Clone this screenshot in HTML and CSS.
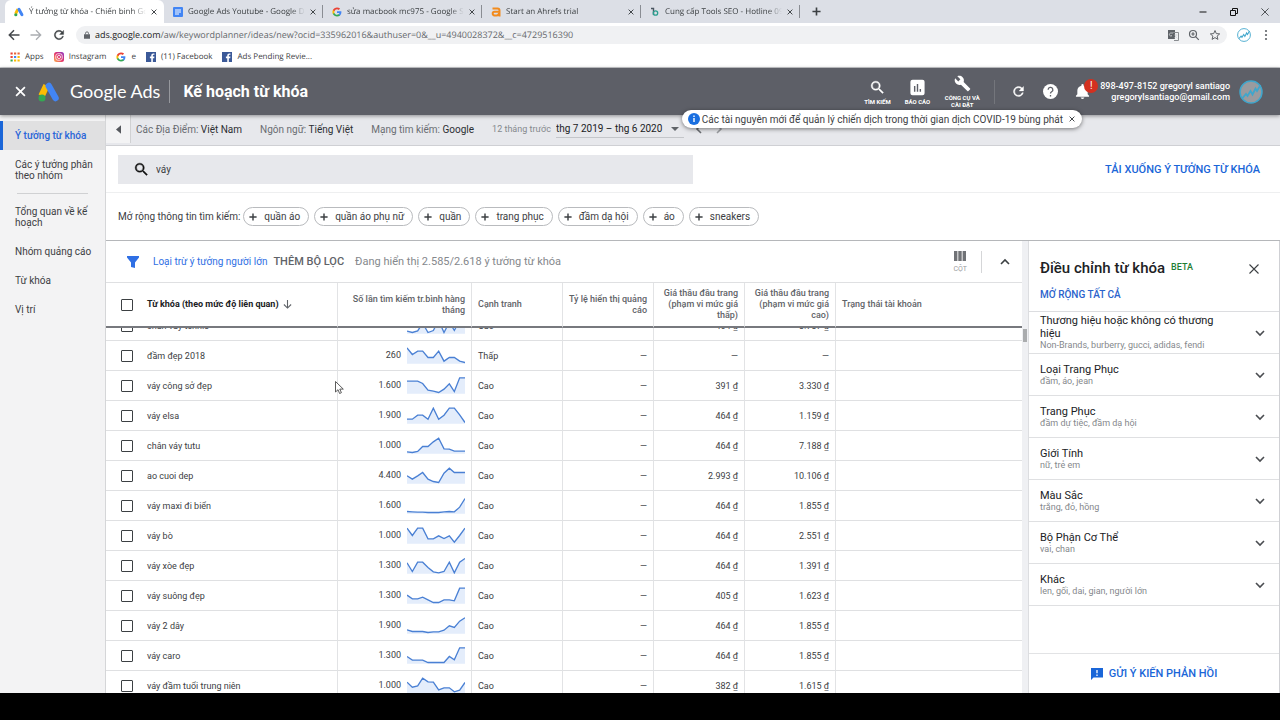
FILE: index.html
```
<!DOCTYPE html>
<html lang="vi">
  <head>
    <meta charset="utf-8">
    <title>Ý tưởng từ khóa - Chiến binh</title>
    <link rel="stylesheet" href="styles.css">
  </head>
  <body>
  <svg class="defs" width="0" height="0" aria-hidden="true">
    <symbol id="x" viewBox="0 0 10 10"><path d="M1 1l8 8M9 1l-8 8" fill="none" stroke="currentColor" stroke-width="1.6"/></symbol>
    <symbol id="x-thin" viewBox="0 0 10 10"><path d="M.5 .5l9 9M9.500 .5l-9 9" fill="none" stroke="currentColor" stroke-width="1.1"/></symbol>
    <symbol id="plus" viewBox="0 0 10 10"><path d="M5 0.500v9M.5 5h9" fill="none" stroke="currentColor" stroke-width="1.800"/></symbol>
    <symbol id="down" viewBox="0 0 10 10"><path d="M1 3l4 4 4-4" fill="none" stroke="currentColor" stroke-width="1.600"/></symbol>
    <symbol id="search" viewBox="0 0 24 24"><path d="M15.500 14h-.79l-.28-.27A6.470 6.470 0 0 0 16 9.500 6.500 6.500 0 1 0 9.500 16c1.610 0 3.090-.59 4.230-1.570l.27.28v.79l5 4.990L20.490 19zm-6 0a4.500 4.500 0 1 1 0-9 4.500 4.500 0 0 1 0 9z" fill="currentColor" stroke="currentColor" stroke-width=".5"/></symbol>
    <symbol id="reload" viewBox="0 0 24 24"><path d="M17.650 6.350A8 8 0 1 0 19.730 14h-2.080A6 6 0 1 1 12 6c1.660 0 3.140.69 4.220 1.780L13 11h7V4z" fill="currentColor" stroke="currentColor" stroke-width=".6"/></symbol>
    <symbol id="ads" viewBox="0 0 22 20"><path d="M8.500 3.500L3.500 14" stroke="#fbbc04" stroke-width="6.500"/><path d="M10.800 4L17.500 16" stroke="#4285f4" stroke-width="6.500" stroke-linecap="round"/><circle cx="4" cy="16" r="3.500" fill="#34a853"/></symbol>
    <symbol id="google" viewBox="0 0 24 24"><path d="M22.560 12.250c0-.78-.07-1.530-.2-2.250H12v4.260h5.920c-.26 1.370-1.040 2.530-2.210 3.310v2.770h3.570c2.080-1.920 3.280-4.740 3.280-8.090z" fill="#4285f4"/><path d="M12 23c2.970 0 5.460-.98 7.280-2.660l-3.570-2.770c-.98.66-2.230 1.060-3.710 1.060-2.860 0-5.290-1.930-6.160-4.530H2.180v2.840C3.990 20.530 7.700 23 12 23z" fill="#34a853"/><path d="M5.840 14.090a6.600 6.600 0 0 1 0-4.180V7.070H2.180a11 11 0 0 0 0 9.860z" fill="#fbbc05"/><path d="M12 5.380c1.620 0 3.060.56 4.210 1.640l3.150-3.150C17.450 2.090 14.970 1 12 1 7.700 1 3.990 3.470 2.180 7.070l3.660 2.840C6.710 7.310 9.140 5.380 12 5.380z" fill="#ea4335"/></symbol>
    <symbol id="facebook" viewBox="0 0 20 20"><path d="M0 0h20v20H0z" fill="#3b5998"/><path d="M13.700 20v-7.700h2.700l.4-3.100h-3.100v-2c0-.9.300-1.500 1.500-1.500h1.700V2.900c-.3 0-1.300-.1-2.400-.1-2.400 0-4 1.500-4 4.100v2.300H7.800v3.100h2.700V20z" fill="#fff"/></symbol>
    <symbol id="chart" viewBox="0 0 24 24"><circle cx="12" cy="12" r="11" fill="var(--fill, #fff)" stroke="#3fa6cc" stroke-width="1.500"/><path d="M3.500 18l3.500-4 1.500 2 3-5 2 3.500 3-6 1.500 2.500L21.500 5" fill="none" stroke="#3fa6cc" stroke-width="1.800"/></symbol>
  </svg>

  <div class="browser">
    <div class="tabs">
      <div class="tab active">
        <svg class="favicon"><use href="#ads"/></svg>
        <span class="tab-title">Ý tưởng từ khóa - Chiến binh Go</span>
        <button class="tab-close" type="button" aria-label="Close"><svg><use href="#x"/></svg></button>
      </div>
      <div class="tab">
        <svg class="favicon" viewBox="0 0 10 10"><rect width="10" height="10" rx="1" fill="#4285f4"/><path d="M2 3h6M2 5h6M2 7h4" stroke="#fff"/></svg>
        <span class="tab-title">Google Ads Youtube - Google D</span>
        <button class="tab-close" type="button" aria-label="Close"><svg><use href="#x"/></svg></button>
      </div>
      <div class="tab">
        <svg class="favicon"><use href="#google"/></svg>
        <span class="tab-title">sửa macbook mc975 - Google Se</span>
        <button class="tab-close" type="button" aria-label="Close"><svg><use href="#x"/></svg></button>
      </div>
      <div class="tab">
        <svg class="favicon" viewBox="0 0 10 10"><path d="M1.500 1.500h5q2 0 2 2V9.500M8 4.800H3.500Q1.700 4.800 1.700 6.600T3.500 8.400H5.500Q8 8.400 8 6" fill="none" stroke="#f28b1d" stroke-width="2"/></svg>
        <span class="tab-title">Start an Ahrefs trial</span>
        <button class="tab-close" type="button" aria-label="Close"><svg><use href="#x"/></svg></button>
      </div>
      <div class="tab">
        <svg class="favicon" viewBox="0 0 10 10"><path d="M1 1.500h2.500V8" fill="none" stroke="#4a5560" stroke-width="1.400"/><circle cx="5.500" cy="6" r="2.200" fill="none" stroke="#2c9f8f" stroke-width="1.300"/></svg>
        <span class="tab-title">Cung cấp Tools SEO - Hotline 09</span>
        <button class="tab-close" type="button" aria-label="Close"><svg><use href="#x"/></svg></button>
      </div>
      <button class="new-tab" type="button" aria-label="New tab"><svg><use href="#plus"/></svg></button>
      <div class="window-buttons">
        <button type="button" aria-label="Minimize"><svg viewBox="0 0 8 8"><path d="M.5 4h7" stroke="#111"/></svg></button>
        <button type="button" aria-label="Restore"><svg viewBox="0 0 8 8"><path d="M2.500 2.500v-2h5v5h-2M.5 2.500h5v5h-5z" fill="none" stroke="#111"/></svg></button>
        <button type="button" aria-label="Close window"><svg><use href="#x-thin"/></svg></button>
      </div>
    </div>

    <div class="toolbar">
      <button type="button" aria-label="Back"><svg viewBox="0 0 12 12"><path d="M11.500 6H1.500M6 1.300L1.300 6 6 10.700" fill="none" stroke="#45484c" stroke-width="1.500"/></svg></button>
      <button type="button" aria-label="Forward"><svg viewBox="0 0 12 12"><path d="M.5 6h10M6 1.300L10.700 6 6 10.700" fill="none" stroke="#aaadb1" stroke-width="1.300"/></svg></button>
      <button type="button" aria-label="Reload"><svg class="reload"><use href="#reload"/></svg></button>
      <div class="omnibox">
        <svg class="lock" viewBox="0 0 8 10"><path d="M0 4h8v6H0z" fill="#5f6368"/><path d="M2 4V2.800a2 2 0 0 1 4 0V4" fill="none" stroke="#5f6368" stroke-width="1.200"/></svg>
        <div class="url"><b>ads.google.com</b>/aw/keywordplanner/ideas/new?ocid=335962016&amp;authuser=0&amp;__u=4940028372&amp;__c=4729516390</div>
        <svg viewBox="0 0 12 12"><path d="M1 1h7v9H1z" fill="#5f6368"/><path d="M6 3.500h5.500v8H7" fill="none" stroke="#8a8d91"/><path d="M6 4H4a1.500 1.500 0 1 0 1 2.500H4.500M7.500 6h3M9 5v1c0 2-1 2.500-1.500 3M8 7l2.500 2.500" fill="none" stroke="#d6d8da" stroke-width=".8"/></svg>
        <svg viewBox="0 0 12 12"><circle cx="5" cy="5" r="3.500" fill="none" stroke="#5f6368" stroke-width="1.200"/><path d="M7.600 7.600l3.200 3.200M3.300 5h3.400M5 3.300v3.400" stroke="#5f6368" stroke-width="1.200"/></svg>
        <svg viewBox="0 0 12 12"><path d="M6 1.500l1.300 3.100 3.400.3-2.600 2.200.8 3.300L6 8.600l-2.900 1.800.8-3.300-2.600-2.200 3.400-.3z" fill="none" stroke="#5f6368"/></svg>
      </div>
      <svg class="profile"><use href="#chart"/></svg>
      <button type="button" aria-label="Menu"><svg viewBox="0 0 12 12" fill="#5f6368"><circle cx="6" cy="2" r="1.100"/><circle cx="6" cy="6" r="1.100"/><circle cx="6" cy="10" r="1.100"/></svg></button>
    </div>

    <nav class="bookmarks">
      <a href="#"><svg viewBox="0 0 10 10"><path d="M.5 1.500h2.200M.5 5h2.200" stroke="#ea4335" stroke-width="2"/><path d="M4 1.500h2.200M7.500 1.500h2.200" stroke="#e8673a" stroke-width="2"/><path d="M4 5h2.200" stroke="#4285f4" stroke-width="2"/><path d="M7.500 5h2.200M7.500 8.500h2.200M4 8.500h2.200" stroke="#fbbc04" stroke-width="2"/><path d="M.5 8.500h2.200" stroke="#34a853" stroke-width="2"/></svg>Apps</a>
      <a href="#"><svg viewBox="0 0 10 10"><defs><linearGradient id="insta" x1="0" y1="1" x2="1" y2="0"><stop offset="0" stop-color="#fdb34b"/><stop offset=".5" stop-color="#e2306c"/><stop offset="1" stop-color="#8a3ac8"/></linearGradient></defs><rect width="10" height="10" rx="2.500" fill="url(#insta)"/><rect x="1.800" y="1.800" width="6.400" height="6.400" rx="2" fill="none" stroke="#fff" stroke-width=".8"/><circle cx="5" cy="5" r="1.600" fill="none" stroke="#fff" stroke-width=".8"/></svg>Instagram</a>
      <a href="#"><svg><use href="#google"/></svg>e</a>
      <a href="#"><svg><use href="#facebook"/></svg>(11) Facebook</a>
      <a href="#"><svg><use href="#facebook"/></svg>Ads Pending Revie...</a>
    </nav>
  </div>

  <header class="header">
    <button class="header-close" type="button" aria-label="Đóng"><svg><use href="#x"/></svg></button>
    <svg class="logo"><use href="#ads"/></svg>
    <span class="brand">Google Ads</span>
    <h1>Kế hoạch từ khóa</h1>
    <button class="tool" type="button"><svg><use href="#search"/></svg>TÌM KIẾM</button>
    <button class="tool" type="button"><svg viewBox="0 0 24 24"><path d="M19 1H5a3 3 0 0 0-3 3v16a3 3 0 0 0 3 3h14a3 3 0 0 0 3-3V4a3 3 0 0 0-3-3zM9 18H7v-8h2zm4 0h-2V7h2zm4 0h-2v-4h2z" fill="#fff"/></svg>BÁO CÁO</button>
    <button class="tool wide" type="button"><svg viewBox="0 0 24 24"><path d="M22.700 19l-9.100-9.100c.9-2.300.4-5-1.500-6.900-2-2-5-2.400-7.400-1.300L9 6 6 9 1.600 4.700C.4 7.100.9 10.100 2.900 12.100c1.900 1.900 4.600 2.400 6.900 1.500l9.100 9.100c.4.4 1 .4 1.400 0l2.300-2.300c.5-.4.5-1.100.1-1.400z" fill="#fff"/></svg>CÔNG CỤ VÀ CÀI ĐẶT</button>
    <div class="header-icons">
      <button type="button" aria-label="Làm mới"><svg><use href="#reload"/></svg></button>
      <button type="button" aria-label="Trợ giúp"><svg viewBox="0 0 16 16"><circle cx="8" cy="8" r="8" fill="#fff"/><path d="M5.500 6.200a2.500 2.500 0 1 1 3.700 2.100C8.300 8.900 8 9.200 8 10.200M8 11.600v1.600" fill="none" stroke="#5f6168" stroke-width="1.400"/></svg></button>
      <button class="bell" type="button" aria-label="Thông báo"><svg viewBox="0 0 16 16"><path d="M8 16a2 2 0 0 0 2-1.600H6A2 2 0 0 0 8 16zM13.500 11V7c0-2.600-1.600-4.600-4.300-5.200V1.200a1.200 1.200 0 0 0-2.400 0v.6C4.100 2.400 2.500 4.400 2.500 7v4L1 12.600v.9h14v-.9z" fill="#fff"/></svg><span class="badge">!</span></button>
    </div>
    <div class="account">898-497-8152 gregoryl santiago<br>gregorylsantiago@gmail.com</div>
    <svg class="avatar"><use href="#chart"/></svg>
    <div class="notice">
      <svg viewBox="0 0 12 12"><circle cx="6" cy="6" r="6" fill="#1a6fe0"/><path d="M6 2.500v1.500M6 5v4" stroke="#fff" stroke-width="1.400"/></svg>
      Các tài nguyên mới để quản lý chiến dịch trong thời gian dịch COVID-19 bùng phát
      <button type="button" aria-label="Đóng thông báo"><svg><use href="#x"/></svg></button>
    </div>
  </header>

  <div class="app">
    <nav class="sidebar">
      <a class="current" href="#">Ý tưởng từ khóa</a>
      <a href="#">Các ý tưởng phân theo nhóm</a>
      <hr>
      <a href="#">Tổng quan về kế hoạch</a>
      <a href="#">Nhóm quảng cáo</a>
      <a href="#">Từ khóa</a>
      <a href="#">Vị trí</a>
    </nav>

    <main>
      <div class="settings">
        <button class="collapse" type="button" aria-label="Thu gọn"><svg viewBox="0 0 6 10"><path d="M6 0v10L0 5z" fill="#55585d"/></svg></button>
        <span>Các Địa Điểm: <b>Việt Nam</b></span>
        <span>Ngôn ngữ: <b>Tiếng Việt</b></span>
        <span>Mạng tìm kiếm: <b>Google</b></span>
        <div class="dates">
          <label for="range">12 tháng trước</label>
          <div class="select">
            <select id="range"><option>thg 7 2019 – thg 6 2020</option></select>
            <svg viewBox="0 0 8 4"><path d="M0 0h8L4 4z" fill="#5f6368"/></svg>
          </div>
          <button class="prev" type="button" aria-label="Trước"><svg><use href="#down"/></svg></button>
          <button class="next" type="button" aria-label="Sau"><svg><use href="#down"/></svg></button>
        </div>
      </div>

      <div class="search-row">
        <div class="search-box">
          <svg><use href="#search"/></svg>
          <input type="text" value="váy" aria-label="Từ khóa tìm kiếm">
        </div>
        <a class="download" href="#">TẢI XUỐNG Ý TƯỞNG TỪ KHÓA</a>
      </div>

      <div class="chips">
        <span>Mở rộng thông tin tìm kiếm:</span>
        <button type="button"><svg><use href="#plus"/></svg>quần áo</button>
        <button type="button"><svg><use href="#plus"/></svg>quần áo phụ nữ</button>
        <button type="button"><svg><use href="#plus"/></svg>quần</button>
        <button type="button"><svg><use href="#plus"/></svg>trang phục</button>
        <button type="button"><svg><use href="#plus"/></svg>đầm dạ hội</button>
        <button type="button"><svg><use href="#plus"/></svg>áo</button>
        <button type="button"><svg><use href="#plus"/></svg>sneakers</button>
      </div>

      <div class="content">
        <section class="results">
          <div class="filters">
            <svg class="funnel" viewBox="0 0 12 12"><path d="M0 0h12v1.500L8 6.500V12L4 11V6.500L0 1.500z" fill="#2f6fe4"/></svg>
            <a href="#">Loại trừ ý tưởng người lớn</a>
            <button class="add-filter" type="button">THÊM BỘ LỌC</button>
            <span class="count">Đang hiển thị 2.585/2.618 ý tưởng từ khóa</span>
            <button class="columns" type="button"><svg viewBox="0 0 12 10"><path d="M0 0h3.400v10H0zM4.300 0h3.400v10H4.300zM8.600 0H12v10H8.600z" fill="#707276"/></svg>CỘT</button>
            <button class="fold" type="button" aria-label="Thu gọn bảng"><svg><use href="#down"/></svg></button>
          </div>

          <div class="table-scroll">
            <table>
              <colgroup>
                <col class="c-check"><col class="c-keyword"><col class="c-volume"><col class="c-metric"><col class="c-metric"><col class="c-metric"><col class="c-metric"><col>
              </colgroup>
              <thead>
                <tr>
                  <th><input type="checkbox" aria-label="Chọn tất cả"></th>
                  <th class="sorted">Từ khóa (theo mức độ liên quan) <svg viewBox="0 0 10 10"><path d="M5 0v9M1 5l4 4 4-4" fill="none" stroke="#5f6368" stroke-width="1.200"/></svg></th>
                  <th class="num">Số lần tìm kiếm tr.bình hàng tháng</th>
                  <th>Cạnh tranh</th>
                  <th class="num">Tỷ lệ hiển thị quảng cáo</th>
                  <th class="num">Giá thầu đầu trang (phạm vi mức giá thấp)</th>
                  <th class="num">Giá thầu đầu trang (phạm vi mức giá cao)</th>
                  <th>Trạng thái tài khoản</th>
                </tr>
              </thead>
              <tbody>
                <tr><td><input type="checkbox" aria-label="chân váy tennis"></td><td>chân váy tennis</td><td class="num">1.300<svg class="spark" data-values="42,46,41,18,46,40,10,46,15,40,10,5"></svg></td><td>Cao</td><td class="num">—</td><td class="num">464 ₫</td><td class="num">3.737 ₫</td><td></td></tr>
                <tr><td><input type="checkbox" aria-label="đầm đẹp 2018"></td><td>đầm đẹp 2018</td><td class="num">260<svg class="spark" data-values="2,22,12,12,31,31,12,42,31,31,42,46"></svg></td><td>Thấp</td><td class="num">—</td><td class="num">—</td><td class="num">—</td><td></td></tr>
                <tr><td><input type="checkbox" aria-label="váy công sở đẹp"></td><td>váy công sở đẹp</td><td class="num">1.600<svg class="spark" data-values="12,12,12,19,39,42,46,36,20,43,2,2"></svg></td><td>Cao</td><td class="num">—</td><td class="num">391 ₫</td><td class="num">3.330 ₫</td><td></td></tr>
                <tr><td><input type="checkbox" aria-label="váy elsa"></td><td>váy elsa</td><td class="num">1.900<svg class="spark" data-values="36,36,24,24,36,3,36,24,3,3,23,46"></svg></td><td>Cao</td><td class="num">—</td><td class="num">464 ₫</td><td class="num">1.159 ₫</td><td></td></tr>
                <tr><td><input type="checkbox" aria-label="chân váy tutu"></td><td>chân váy tutu</td><td class="num">1.000<svg class="spark" data-values="44,46,43,28,28,14,3,35,36,42,42,42"></svg></td><td>Cao</td><td class="num">—</td><td class="num">464 ₫</td><td class="num">7.188 ₫</td><td></td></tr>
                <tr><td><input type="checkbox" aria-label="ao cuoi dep"></td><td>ao cuoi dep</td><td class="num">4.400<svg class="spark" data-values="26,36,26,16,36,43,46,18,3,16,16,16"></svg></td><td>Cao</td><td class="num">—</td><td class="num">2.993 ₫</td><td class="num">10.106 ₫</td><td></td></tr>
                <tr><td><input type="checkbox" aria-label="váy maxi đi biển"></td><td>váy maxi đi biển</td><td class="num">1.600<svg class="spark" data-values="43,44,45,45,46,46,46,44,43,44,30,4"></svg></td><td>Cao</td><td class="num">—</td><td class="num">464 ₫</td><td class="num">1.855 ₫</td><td></td></tr>
                <tr><td><input type="checkbox" aria-label="váy bò"></td><td>váy bò</td><td class="num">1.000<svg class="spark" data-values="3,25,3,3,35,35,26,34,26,45,25,3"></svg></td><td>Cao</td><td class="num">—</td><td class="num">464 ₫</td><td class="num">2.551 ₫</td><td></td></tr>
                <tr><td><input type="checkbox" aria-label="váy xòe đẹp"></td><td>váy xòe đẹp</td><td class="num">1.300<svg class="spark" data-values="17,43,15,15,31,44,47,43,15,47,15,4"></svg></td><td>Cao</td><td class="num">—</td><td class="num">464 ₫</td><td class="num">1.391 ₫</td><td></td></tr>
                <tr><td><input type="checkbox" aria-label="váy suông đẹp"></td><td>váy suông đẹp</td><td class="num">1.300<svg class="spark" data-values="24,35,35,30,38,46,46,38,38,41,3,3"></svg></td><td>Cao</td><td class="num">—</td><td class="num">405 ₫</td><td class="num">1.623 ₫</td><td></td></tr>
                <tr><td><input type="checkbox" aria-label="váy 2 dây"></td><td>váy 2 dây</td><td class="num">1.900<svg class="spark" data-values="38,43,43,43,46,44,44,39,26,31,12,2"></svg></td><td>Cao</td><td class="num">—</td><td class="num">464 ₫</td><td class="num">1.855 ₫</td><td></td></tr>
                <tr><td><input type="checkbox" aria-label="váy caro"></td><td>váy caro</td><td class="num">1.300<svg class="spark" data-values="28,39,39,39,46,46,46,46,28,38,2,2"></svg></td><td>Cao</td><td class="num">—</td><td class="num">464 ₫</td><td class="num">1.855 ₫</td><td></td></tr>
                <tr><td><input type="checkbox" aria-label="váy đầm tuổi trung niên"></td><td>váy đầm tuổi trung niên</td><td class="num">1.000<svg class="spark" data-values="15,30,26,3,14,15,38,32,32,44,39,16"></svg></td><td>Cao</td><td class="num">—</td><td class="num">382 ₫</td><td class="num">1.615 ₫</td><td></td></tr>
              </tbody>
            </table>
          </div>
        </section>

        <div class="gutter"><div class="thumb"></div></div>

        <aside class="refine">
          <div class="refine-head">
            <h2>Điều chỉnh từ khóa</h2>
            <span class="beta">BETA</span>
            <button type="button" aria-label="Đóng bảng"><svg><use href="#x-thin"/></svg></button>
          </div>
          <a class="expand-all" href="#">MỞ RỘNG TẤT CẢ</a>
          <div class="groups">
            <button type="button"><span>Thương hiệu hoặc không có thương hiệu<small>Non-Brands, burberry, gucci, adidas, fendi</small></span><svg><use href="#down"/></svg></button>
            <button type="button"><span>Loại Trang Phục<small>đầm, áo, jean</small></span><svg><use href="#down"/></svg></button>
            <button type="button"><span>Trang Phục<small>đầm dự tiệc, đầm dạ hội</small></span><svg><use href="#down"/></svg></button>
            <button type="button"><span>Giới Tính<small>nữ, trẻ em</small></span><svg><use href="#down"/></svg></button>
            <button type="button"><span>Màu Sắc<small>trắng, đỏ, hồng</small></span><svg><use href="#down"/></svg></button>
            <button type="button"><span>Bộ Phận Cơ Thể<small>vai, chan</small></span><svg><use href="#down"/></svg></button>
            <button type="button"><span>Khác<small>len, gối, dai, gian, người lớn</small></span><svg><use href="#down"/></svg></button>
          </div>
          <button class="feedback" type="button"><svg viewBox="0 0 12 12"><path d="M0 0h12v9.500H2.500L0 12z" fill="#1a66d8"/><path d="M6 2v3.300M6 6.500V8" stroke="#fff" stroke-width="1.300"/></svg>GỬI Ý KIẾN PHẢN HỒI</button>
        </aside>
      </div>
    </main>
  </div>

  <svg class="cursor" viewBox="0 0 9 13"><path d="M.5 .5v10.500l2.500-2.300 1.600 3.800 1.800-.8-1.600-3.600h3.500z" fill="#fff" stroke="#333" stroke-width=".8"/></svg>

  <script src="script.js"></script>
  </body>
</html>
```

FILE: styles.css
```
* {
  box-sizing: border-box;
}
body {
  display: flex;
  flex-direction: column;
  height: 100vh;
  margin: 0;
  padding-bottom: 27px;
  overflow: hidden;
  background-color: #000;
  color: #3c4043;
  font-family: Roboto, "Liberation Sans", sans-serif;
  font-size: 10px;
}
a {
  color: inherit;
  text-decoration: none;
}
button {
  display: flex;
  align-items: center;
  padding: 0;
  border: 0;
  background: none;
  color: inherit;
  font: inherit;
  text-rendering: inherit;
  cursor: pointer;
}
svg {
  flex: none;
  width: 12px;
  height: 12px;
}
.defs {
  position: absolute;
  width: 0;
  height: 0;
}

/* Browser */
.browser {
  flex: none;
  background-color: #fff;
  font-family: "Open Sans", "Noto Sans", sans-serif;
  font-size: 8px;
  text-rendering: geometricPrecision;
}
.tabs {
  display: flex;
  align-items: center;
  height: 23px;
  padding-left: 5px;
  background-color: #dcdfe6;
}
.tab {
  display: flex;
  flex: 0 1 159px;
  align-items: center;
  min-width: 0;
  height: 23px;
  padding: 0 7px 0 9px;
  gap: 5px;
}
.tab.active {
  border-radius: 6px 6px 0 0;
  background-color: #fff;
}
.tab:not(.active) {
  background: linear-gradient(#8a8d93, #8a8d93) right center / 1px 13px no-repeat;
}
.favicon {
  width: 10px;
  height: 10px;
}
.tab-title {
  flex: 1;
  overflow: hidden;
  white-space: nowrap;
  -webkit-mask-image: linear-gradient(90deg, #000 88%, transparent);
  mask-image: linear-gradient(90deg, #000 88%, transparent);
}
.tab-close svg {
  width: 6px;
  height: 6px;
}
.new-tab {
  margin-left: 12px;
}
.new-tab svg {
  width: 9px;
  height: 9px;
}
.window-buttons {
  display: flex;
  margin-left: auto;
}
.window-buttons button {
  justify-content: center;
  width: 31px;
  height: 20px;
}
.window-buttons svg {
  width: 8px;
  height: 8px;
}
.toolbar {
  display: flex;
  align-items: center;
  height: 23px;
  padding: 0 8px;
  gap: 10px;
}
.toolbar > button:nth-of-type(3) svg {
  width: 14px;
  height: 14px;
}
.omnibox {
  display: flex;
  flex: 1;
  align-items: center;
  height: 18px;
  padding: 0 6px 0 8px;
  gap: 9px;
  border-radius: 9px;
  background-color: #f0f1f3;
}
.lock {
  width: 6px;
  height: 8px;
}
.url {
  flex: 1;
  margin-left: -4px;
  color: #66696d;
  font-size: 9px;
}
.url b {
  color: #222;
  font-weight: normal;
}
.profile {
  width: 14px;
  height: 14px;
  margin-right: -1px;
}
.bookmarks {
  display: flex;
  align-items: center;
  height: 22px;
  padding: 0 10px;
  gap: 10px;
  border-bottom: 1px solid #c9cbce;
}
.bookmarks a {
  display: flex;
  align-items: center;
  gap: 5px;
}
.bookmarks svg {
  width: 10px;
  height: 10px;
}

/* Header */
.header {
  position: relative;
  z-index: 2;
  display: flex;
  flex: none;
  align-items: center;
  height: 47px;
  padding: 0 17px 0 15px;
  background-color: #5d5f67;
  box-shadow: 0 1px 4px rgba(0, 0, 0, .4);
  color: #fff;
}
.header-close svg {
  width: 11px;
  height: 11px;
}
.logo {
  width: 22px;
  height: 20px;
  margin: 0 10px 0 12px;
}
.brand {
  padding-right: 9px;
  border-right: 1px solid #96989d;
  font-family: Lato, sans-serif;
  font-size: 18px;
  line-height: 23px;
}
h1 {
  flex: 1;
  margin: 0 0 0 13px;
  font-size: 16px;
  font-weight: 700;
}
.tool {
  flex-direction: column;
  margin-right: 14px;
  gap: 2px;
  font-size: 6px;
  font-weight: 700;
  line-height: 7px;
}
.tool svg {
  width: 17px;
  height: 17px;
}
.tool.wide {
  width: 36px;
}
.header-icons {
  display: flex;
  margin-right: 10px;
  padding-left: 16px;
  gap: 17px;
  border-left: 1px solid #74767c;
}
.header-icons button {
  height: 24px;
}
.header-icons svg {
  width: 15px;
  height: 15px;
}
.bell {
  position: relative;
}
.badge {
  position: absolute;
  top: -1px;
  right: -8px;
  width: 14px;
  height: 14px;
  border-radius: 7px;
  background-color: #d3301f;
  font-size: 10px;
  line-height: 14px;
  text-align: center;
}
.account {
  margin-right: 9px;
  font-size: 9px;
  font-weight: 500;
  line-height: 11px;
  text-align: right;
}
.avatar {
  --fill: #999b9f;
  width: 24px;
  height: 24px;
}
.notice {
  position: absolute;
  top: 42px;
  right: 198px;
  display: flex;
  align-items: center;
  height: 18px;
  padding: 0 7px 0 6px;
  gap: 2px;
  border-radius: 9px;
  background-color: #fff;
  box-shadow: 0 1px 4px rgba(0, 0, 0, .5);
  color: #3c4043;
}
.notice button {
  margin-left: 4px;
}
.notice button svg {
  width: 6px;
  height: 6px;
}

/* Layout */
.app {
  display: flex;
  flex: 1;
  min-height: 0;
  background-color: #fff;
}
.sidebar {
  flex: none;
  width: 106px;
  padding-top: 6px;
  border-right: 1px solid #d5d6d8;
  background-color: #f3f3f4;
  line-height: 11px;
}
.sidebar a {
  display: block;
  padding: 9px 12px 9px 15px;
}
.sidebar .current {
  padding-left: 12px;
  border-left: 3px solid #1a66d8;
  background-color: #e0e0e1;
  color: #2a66d8;
  font-weight: 500;
}
.sidebar hr {
  margin: 3px 17px;
  border: 0;
  border-top: 1px solid #d0d1d3;
}
main {
  display: flex;
  flex: 1;
  flex-direction: column;
  min-width: 0;
}
.settings {
  display: flex;
  flex: none;
  align-items: center;
  height: 31px;
  padding-bottom: 2px;
  gap: 18px;
  border-bottom: 1px solid #cfd0d4;
  background-color: #e7e8ec;
  color: #6a6d72;
}
.settings b {
  color: #2c2f33;
  font-weight: 400;
}
.collapse {
  align-self: stretch;
  justify-content: center;
  width: 25px;
  margin-right: -13px;
  border-right: 1px solid #d0d1d3;
  background-color: #f3f3f4;
}
.collapse svg {
  width: 5px;
  height: 9px;
}
.dates {
  display: flex;
  align-items: center;
  gap: 5px;
}
.dates label {
  color: #85888c;
  font-size: 9px;
}
.select {
  display: flex;
  align-items: center;
  padding-right: 5px;
  border-bottom: 1px solid #c4c6ca;
}
select {
  width: 115px;
  height: 17px;
  padding: 0;
  border: 0;
  background: none;
  color: #202124;
  font: inherit;
  appearance: none;
}
.select svg {
  width: 8px;
  height: 4px;
}
.prev, .next {
  margin-left: 5px;
}
.prev svg, .next svg {
  width: 10px;
  height: 10px;
}
.prev svg {
  transform: rotate(90deg);
}
.next svg {
  color: #9a9ca0;
  transform: rotate(-90deg);
}
.search-row {
  display: flex;
  flex: none;
  align-items: center;
  justify-content: space-between;
  height: 47px;
  padding: 0 12px;
  border-bottom: 1px solid #eeeff0;
}
.search-box {
  display: flex;
  align-items: center;
  width: 50%;
  height: 29px;
  padding-left: 15px;
  gap: 4px;
  background-color: #e7e8ec;
}
.search-box svg {
  width: 17px;
  height: 17px;
  color: #111;
}
.search-box input {
  flex: 1;
  border: 0;
  outline: 0;
  background: none;
  color: inherit;
  font: inherit;
}
.download {
  margin-right: 8px;
  color: #1a66d8;
  font-size: 11px;
  font-weight: 500;
}
.chips {
  display: flex;
  flex: none;
  align-items: center;
  height: 48px;
  padding-left: 12px;
  gap: 5px;
  border-bottom: 1px solid #b5b7ba;
}
.chips span {
  margin-right: -2px;
}
.chips button {
  height: 19px;
  padding: 0 8px 0 5px;
  gap: 7px;
  border: 1px solid #b9bbbe;
  border-radius: 10px;
}
.chips svg {
  width: 8px;
  height: 8px;
}
.content {
  display: flex;
  flex: 1;
  min-height: 0;
}

/* Keyword table */
.results {
  display: flex;
  flex: 1;
  flex-direction: column;
  min-width: 0;
}
.filters {
  display: flex;
  flex: none;
  align-items: center;
  height: 42px;
  padding: 0 12px 0 21px;
  border-bottom: 1px solid #dfe0e2;
}
.filters a {
  margin: 0 6px 0 14px;
  color: #2f6fe4;
}
.add-filter {
  margin-right: 11px;
  color: #5f6368;
  font-size: 11px;
  font-weight: 500;
}
.count {
  flex: 1;
  color: #85888c;
  font-size: 11px;
}
.columns {
  flex-direction: column;
  padding-right: 14px;
  gap: 4px;
  border-right: 1px solid #d5d6d8;
  color: #9a9ca0;
  font-size: 7px;
  line-height: 8px;
}
.columns svg {
  height: 10px;
}
.fold {
  margin-left: 18px;
}
.fold svg {
  width: 10px;
  height: 10px;
  transform: rotate(180deg);
}
.table-scroll {
  flex: 1;
  min-height: 0;
  overflow: hidden;
}
table {
  width: 100%;
  border-spacing: 0;
  table-layout: fixed;
  font-size: 9px;
}
.c-check {
  width: 34px;
}
.c-keyword {
  width: 198px;
}
.c-volume {
  width: 134px;
}
.c-metric {
  width: 91px;
}
th, td {
  padding: 0 6px;
  border-right: 1px solid #e2e3e5;
  text-align: left;
}
th {
  position: sticky;
  top: 0;
  height: 45px;
  border-bottom: 2px solid #77797e;
  background-color: #fff;
  color: #5f6368;
  font-weight: 500;
  line-height: 11px;
}
td {
  height: 30px;
  border-bottom: 1px solid #dfe0e2;
  white-space: nowrap;
}
th:first-child, td:first-child {
  padding-left: 15px;
  border-right: 0;
}
th:nth-child(2), td:nth-child(2) {
  padding-left: 7px;
}
th:last-child, td:last-child {
  border-right: 0;
}
th.sorted {
  color: #202124;
  font-weight: 700;
}
.sorted svg {
  width: 9px;
  height: 9px;
  margin-left: 2px;
  vertical-align: middle;
}
th.num, td.num {
  padding-left: 0;
  text-align: right;
}
input[type=checkbox] {
  display: block;
  width: 12px;
  height: 12px;
  margin: 0;
  border: 1px solid #3c4043;
  border-radius: 1px;
  appearance: none;
}
.spark {
  width: 58px;
  height: 17px;
  margin-left: 6px;
  vertical-align: -6px;
}
.spark polygon {
  fill: #e4edfb;
}
.spark polyline {
  fill: none;
  stroke: #4a80d4;
  stroke-width: 4;
}
.gutter {
  flex: none;
  width: 7px;
  padding: 88px 1px 0;
  border-right: 1px solid #dcdde0;
  background-color: #eff0f3;
}
.thumb {
  height: 13px;
  background-color: #aaacae;
}

/* Refine keywords panel */
.refine {
  display: flex;
  flex: none;
  flex-direction: column;
  width: 251px;
  border-right: 1px solid #cfd0d4;
}
.refine-head {
  display: flex;
  align-items: center;
  padding: 18px 20px 0 11px;
}
h2 {
  margin: 0;
  color: #202124;
  font-size: 15px;
  font-weight: 500;
  line-height: 19px;
}
.beta {
  margin: 0 auto 4px 6px;
  color: #1e7e34;
  font-size: 9px;
  font-weight: 500;
}
.refine-head svg {
  width: 10px;
  height: 10px;
}
.expand-all {
  padding: 11px;
  color: #2a62cc;
  font-weight: 500;
}
.groups {
  flex: 1;
  border-top: 1px solid #dcdde0;
}
.groups button {
  justify-content: space-between;
  width: 100%;
  height: 42px;
  padding: 0 14px 0 11px;
  border-bottom: 1px solid #dfe0e2;
  color: #202124;
  font-size: 11px;
  line-height: 13px;
  text-align: left;
}
.groups span {
  max-width: 185px;
}
.groups small {
  display: block;
  color: #85888c;
  font-size: 9px;
  line-height: 11px;
}
.groups svg {
  width: 10px;
  height: 10px;
  color: #4a4d51;
}
.feedback {
  justify-content: center;
  height: 40px;
  gap: 6px;
  border-top: 1px solid #e2e3e5;
  color: #1a66d8;
  font-size: 11px;
  font-weight: 500;
}

.cursor {
  position: absolute;
  top: 381px;
  left: 335px;
  z-index: 3;
  width: 9px;
  height: 13px;
}
```

FILE: script.js
```
// Draw a sparkline for each row from its monthly values
var STEP = 174 / 11;
document.querySelectorAll('.spark').forEach(function(svg) {
  var points = svg.dataset.values.split(',').map(function(y, i) {
    return Math.round(i * STEP) + ',' + y;
  }).join(' ');
  svg.setAttribute('viewBox', '0 0 174 50');
  svg.innerHTML = '<polygon points="0,50 ' + points + ' 174,50"/><polyline points="' + points + '"/>';
});

document.querySelector('.table-scroll').scrollTop = 17;
```
